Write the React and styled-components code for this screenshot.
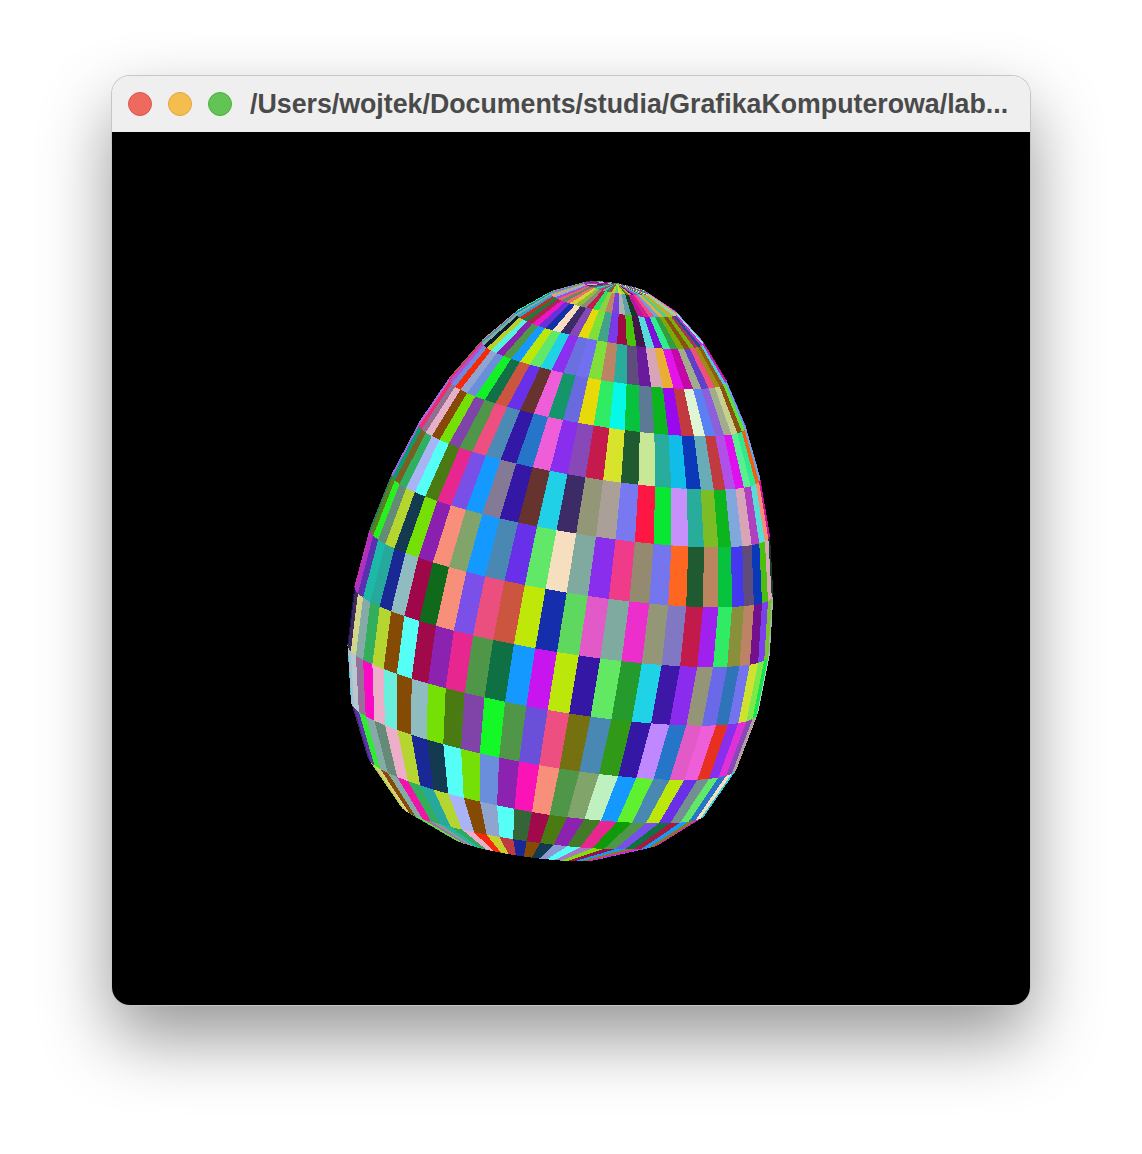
import styled, { createGlobalStyle } from "styled-components";

const GlobalStyle = createGlobalStyle`
  html, body { margin: 0; background: #fff; }
`;

const Page = styled.div`
  width: 1142px;
  height: 1154px;
  padding: 76px 0 0 112px;
  box-sizing: border-box;
`;

const Win = styled.div`
  width: 918px;
  height: 929px;
  border-radius: 18px;
  overflow: hidden;
  display: flex;
  flex-direction: column;
  box-shadow: 0 0 0 1px #c6c6c6, 0 32px 70px 0 rgba(0, 0, 0, 0.42);
`;

const TitleBar = styled.div`
  height: 56px;
  background: #efefef;
  display: flex;
  align-items: center;
  padding-left: 16px;
  gap: 16px;
`;

const Light = styled.span`
  width: 24px;
  height: 24px;
  border-radius: 50%;
  box-sizing: border-box;
  background: ${(p) => p.$c};
  border: 1px solid ${(p) => p.$b};
`;

const Title = styled.div`
  margin-left: 2px;
  font: bold 26.75px "Liberation Sans", Arial, sans-serif;
  color: #4a4a4a;
  white-space: nowrap;
`;

const Canvas = styled.div`
  flex: 1;
  background: #000;
  display: flex;
`;

// colours per band (top of the egg first), left to right on the front side
const BANDS = [
  [],
  ["#b060d0","#60c090","#f0a060","#80b0f0","#a050d0","#f06060","#5a8a70","#f07060","#d8d040","#90c030","#8a8a80","#c41a4c","#30e060","#90d040","#bc8464","#7a40e0","#a8b4b0","#60a0a8","#143a20","#c014a0","#d8208c","#f05090","#6fa0e0","#e0b040","#50c8a0","#a0c030","#e0a020","#60e0d0","#c0d060","#f090b0"],
  ["#2a80c0","#7ab0a0","#30a0d0","#c03020","#207a40","#a8264a","#ee14c8","#6a30d8","#1430a8","#f6dfbe","#3c2b66","#8548b8","#e8da08","#80e03a","#3fa488","#7a3ae8","#a00a44","#48c40a","#42184a","#55dcd8","#7a10d8","#30ec90","#2ea040","#7ea808","#8a5010","#78b008","#a83060","#1a5090","#c030e0","#a0e0f0"],
  ["#4a90c0","#7ab0a0","#101830","#b5d12a","#55f0e0","#8a22b0","#4f9648","#1399ff","#bbe80a","#62e868","#1fd2e6","#8a30ee","#6a70e0","#7070f0","#80e03a","#bc8464","#28ac9c","#5f4c7c","#6a1a9c","#d8a4b8","#ebae34","#e214ea","#c408a8","#a0ac8c","#6040c8","#ee4f80","#a08a10","#8a6010","#50c8e0","#c020e0"],
  ["#f02a70","#b050d0","#6f8adc","#f52a08","#8fa4d0","#6a8edc","#14f028","#127048","#cc5540","#6830e8","#66332f","#ee5ed8","#14966a","#6a6ae0","#e8da08","#30ec64","#05f8e8","#06c23c","#5c7a96","#0cb41e","#9a08ee","#c03a40","#dff5d4","#5a80f4","#8c60dc","#a0ac8c","#c8d090","#8a5010","#60e030","#60a8e8"],
  ["#b060e0","#f02a70","#8f7090","#e8b0c8","#88480a","#75e005","#8044a8","#4f9648","#ee4f80","#4a8ab4","#3318a8","#2775c8","#ee5ed8","#8a2eee","#8848b8","#c41a4c","#d8e42c","#1f5a30","#c8e898","#28ac9c","#10bce8","#0a38b8","#68acb8","#c03a40","#b050e8","#e010ee","#58f090","#30e890","#f06010","#60a8e8"],
  ["#a060e8","#0a9a70","#7a6020","#2eb060","#a8b4f5","#55fff5","#4a7a12","#e8268f","#7850e8","#1399ff","#857a96","#3417a5","#66332f","#1fd0e6","#3c2b66","#949678","#aaa098","#7878f0","#fe1744","#08e832","#c890fa","#28ac9c","#7cbc24","#0cb41e","#80a8dc","#d8a4b8","#b040c0","#58dcd8","#fa8a70","#d010a0"],
  ["#2a7a5a","#5a7f20","#28f020","#668a78","#b4d62e","#143a52","#75e005","#8b1fb0","#f78f7a","#80a46a","#1399ff","#4a88b4","#6830e8","#62e868","#f6dfbe","#80aaa0","#8a2eee","#f03a8a","#948a70","#7575ee","#fe6622","#1f5a30","#bb8560","#07c23c","#4438ee","#5e4c7c","#0a38b8","#4cc010","#d8a8b0","#1a3a30"],
  ["#c030b0","#b02ec0","#5c2fb0","#1cb8a8","#27a89c","#1a2896","#8fbcc0","#a00748","#0f6a1c","#f78f7a","#7a50e8","#eb4f80","#cc5540","#bfe808","#142eac","#5fd860","#e25ac8","#7faaa0","#ec2ecc","#949678","#8178c4","#c21a4a","#a020ee","#30ec64","#88903c","#bc8464","#75108c","#7a40ee","#7ec030","#a0b8a8"],
  ["#1a1060","#3a2a55","#d3d68a","#85aaa8","#33ae5c","#b5d630","#854b05","#55fff5","#a00a4b","#8b22b0","#e8268f","#4f9648","#0f7044","#1399ff","#c814ee","#bbe80a","#3417a5","#62e863","#259b2d","#1fd2e6","#3c17a8","#8a2bee","#939478","#6a6ae8","#2f74b8","#7373f0","#cfe230","#7de84a","#12e84a","#b5c8c8"],
  ["#2fd0d8","#a8c0d0","#b8c8d0","#967098","#fa0ac4","#ecaec8","#68f0dc","#854b05","#8fbcc0","#75e005","#4a7a12","#8044a8","#14f828","#4f9648","#6a50d8","#ec4f80","#757010","#4a88b4","#309a18","#3417a5","#c088fe","#2775c8","#e25ac8","#ee5ed8","#e83020","#8a2eee","#e030d8","#8848b8","#b0a0a0","#d8a4b8"],
  ["#c8a8e8","#3a2a60","#6030b0","#30ec30","#85aaa8","#668a78","#ecaec8","#b5d630","#1a2896","#143a52","#55fff5","#75e005","#6a8edc","#8b22b0","#fa14b8","#f78f7a","#4f9648","#80a46a","#bff0c0","#1399ff","#5ff030","#4a88b4","#bbe80a","#6a30e8","#739090","#62e868","#2775c8","#f6dfbe","#30d0e0","#1fa0c0"],
  ["#7dbb7d","#5a7a3a","#b0d040","#d8d080","#854b05","#85aaa8","#f014a8","#33ae5c","#27a89c","#b5d630","#a8b4f5","#854b05","#90a4d0","#55fff5","#356437","#a00a4b","#4a7a12","#8b22b0","#427a2a","#e8268f","#0f9a08","#4f9648","#7850e8","#0f7044","#a81a3c","#1399ff","#848010","#e020c0","#8a40d0","#e020c0"],
  ["#3090d0","#f070b0","#60d0a0","#80b030","#30d060","#70e030","#a070a8","#8a9a98","#22b8a0","#30a860","#ecaec8","#f52a08","#c8d030","#c03a40","#1a2896","#854b05","#143a52","#8a9ad4","#55fff5","#a878c8","#80e000","#a00a4b","#1399ff","#848010","#e020c0","#c030e0","#60a0d0","#f070b0","#30c070","#d0a030"],
  [],
];

const FILLER = BANDS.flat();

const S = 58;
const SA = 0.1616, CA = 0.9869;
const SB = 0.15, CB = 0.9887;
const CX = 570.5, CY = 568.5;
const N = 30;

function point(i, j) {
  const u = i / N;
  const r = Math.abs(-90 * u ** 5 + 225 * u ** 4 - 270 * u ** 3 + 180 * u ** 2 - 45 * u);
  const h = 160 * u * u * (1 - u) * (1 - u) - 5;
  const t = Math.PI - (j * Math.PI) / N;
  const x = r * Math.cos(t);
  const z = r * Math.sin(t);
  const up = h * CB - z * SB;
  let py = CY + S * (x * SA - up * CA);
  py = 530 + (py - 530) * 1.01;
  if (py > 810) py += 6 - (py - 810) * 0.13;
  else if (py > 700) py += (py - 700) * 0.055;
  return { px: CX + S * (x * CA + up * SA), py, d: z * CB + h * SB };
}

function quads() {
  const out = [];
  for (let i = 0; i < 15; i++) {
    for (let j = -30; j < 30; j++) {
      const a = point(15 - i, j), b = point(15 - i, j + 1), c = point(14 - i, j + 1), e = point(14 - i, j);
      const fill = BANDS[i][j] || FILLER[Math.abs(i * 73 + j * 41) % FILLER.length];
      out.push({
        key: i + "_" + j,
        d: (a.d + b.d + c.d + e.d) / 4,
        pts: [a, b, c, e].map((p) => p.px.toFixed(1) + "," + p.py.toFixed(1)).join(" "),
        fill,
      });
    }
  }
  return out.sort((p, q) => p.d - q.d);
}

export default function App() {
  return (
    <Page>
      <GlobalStyle />
      <Win>
        <TitleBar>
          <Light $c="#ee6a5f" $b="#d9574d" />
          <Light $c="#f5bd4f" $b="#dfa63c" />
          <Light $c="#61c454" $b="#4fae43" />
          <Title>/Users/wojtek/Documents/studia/GrafikaKomputerowa/lab...</Title>
        </TitleBar>
        <Canvas>
          <svg width="918" height="873" viewBox="112 132 918 873">
            {quads().map((q) => (
              <polygon key={q.key} points={q.pts} fill={q.fill} shapeRendering="crispEdges" />
            ))}
          </svg>
        </Canvas>
      </Win>
    </Page>
  );
}
